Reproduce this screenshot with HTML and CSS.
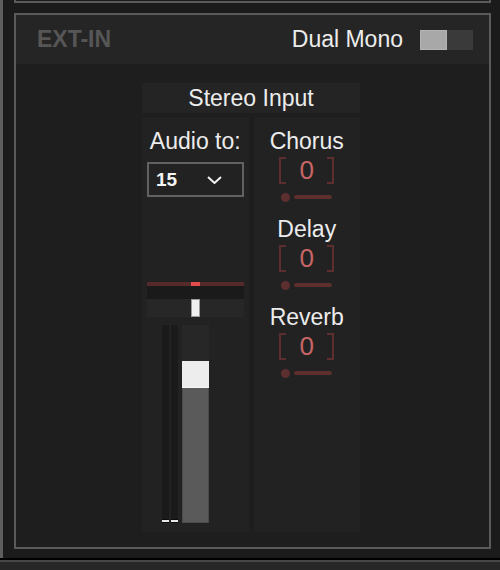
FILE: index.html
```html
<!DOCTYPE html>
<html lang="en">
<head>
    <meta charset="UTF-8">
    <meta name="viewport" content="width=device-width, initial-scale=1.0">
    <title>EXT-IN</title>
    <link rel="stylesheet" href="styles.css">
</head>
<body>
    <div class="rack">
        <div class="prev-panel"></div>
        <section class="panel">
            <header class="panel-head">
                <span class="panel-title">EXT-IN</span>
                <span class="mode-label">Dual Mono</span>
                <span class="toggle"><span class="toggle-knob"></span></span>
            </header>
            <div class="panel-body">
                <div class="strip">
                    <div class="strip-name">Stereo Input</div>
                    <div class="strip-cols">
                        <div class="col col-route">
                            <div class="label">Audio to:</div>
                            <div class="select">
                                <span class="select-value">15</span>
                                <svg class="chevron" width="15" height="8" viewBox="0 0 15 8">
                                    <polyline points="1,1 7.5,7 14,1" fill="none" stroke="#f2f2f2" stroke-width="2"/>
                                </svg>
                            </div>
                            <div class="pan">
                                <div class="pan-line"><span class="pan-mark"></span></div>
                                <div class="pan-gap"></div>
                                <div class="pan-track"><span class="pan-knob"></span></div>
                            </div>
                            <div class="level">
                                <div class="meter"><span class="peak"></span></div>
                                <div class="meter"><span class="peak"></span></div>
                                <div class="fader">
                                    <div class="fader-track"></div>
                                    <div class="fader-cap"></div>
                                    <div class="fader-fill"></div>
                                </div>
                            </div>
                        </div>
                        <div class="col col-sends">
                            <div class="send">
                                <div class="label">Chorus</div>
                                <div class="send-value"><span class="br br-l"></span><span class="num">0</span><span class="br br-r"></span></div>
                                <div class="send-slider"><span class="dot"></span><span class="line"></span></div>
                            </div>
                            <div class="send">
                                <div class="label">Delay</div>
                                <div class="send-value"><span class="br br-l"></span><span class="num">0</span><span class="br br-r"></span></div>
                                <div class="send-slider"><span class="dot"></span><span class="line"></span></div>
                            </div>
                            <div class="send">
                                <div class="label">Reverb</div>
                                <div class="send-value"><span class="br br-l"></span><span class="num">0</span><span class="br br-r"></span></div>
                                <div class="send-slider"><span class="dot"></span><span class="line"></span></div>
                            </div>
                        </div>
                    </div>
                </div>
            </div>
        </section>
    </div>
    <div class="rack-foot"></div>
</body>
</html>
```

FILE: styles.css
```css
:root {
    --bg: #1b1b1b;
    --panel-bg: #1e1e1e;
    --head-bg: #252525;
    --col-bg: #222222;
    --frame: #5a5a5a;
    --text: #ececec;
    --send-dark: #5c2e2e;
    --send-red: #c86565;
}
* {
    box-sizing: border-box;
}
body {
    margin: 0;
    width: 500px;
    height: 570px;
    overflow: hidden;
    background-color: var(--bg);
    font-family: 'Liberation Sans', Helvetica, Arial, sans-serif;
    color: var(--text);
}
.rack {
    height: 558px;
    border-left: 3px solid #5e5e5e;
    padding-left: 11px;
}
.prev-panel {
    width: 477px;
    height: 3px;
    border: 2px solid var(--frame);
    border-top: none;
}
.panel {
    width: 477px;
    height: 536px;
    margin-top: 10px;
    border: 2px solid var(--frame);
    background-color: var(--panel-bg);
}
.panel-head {
    height: 49px;
    display: flex;
    align-items: center;
    padding: 0 16px 0 21px;
    background-color: var(--head-bg);
}
.panel-title {
    flex: 1;
    font-size: 23px;
    font-weight: 700;
    color: #565656;
}
.mode-label {
    font-size: 23px;
    margin-right: 17px;
}
.toggle {
    display: flex;
    width: 53px;
    height: 20px;
    background-color: #3a3a3a;
}
.toggle-knob {
    width: 27px;
    height: 20px;
    background-color: #a8a8a8;
    border: 1px solid #b4b4b4;
}
.panel-body {
    display: flex;
    justify-content: center;
    padding: 19px 3px 0 0;
}
.strip {
    width: 218px;
}
.strip-name {
    height: 30px;
    line-height: 30px;
    text-align: center;
    font-size: 23px;
    background-color: #242424;
}
.strip-cols {
    display: grid;
    grid-template-columns: 1fr 1fr;
    gap: 5px;
    height: 415px;
    margin-top: 4px;
}
.col {
    background-color: var(--col-bg);
}
.label {
    height: 26px;
    line-height: 26px;
    font-size: 23px;
    text-align: center;
}
.col-route {
    padding-top: 11px;
}

/* output select */
.select {
    height: 35px;
    margin: 8px 5px 0;
    display: flex;
    align-items: center;
    justify-content: space-between;
    padding: 0 20px 0 7px;
    border: 2px solid #616161;
}
.select-value {
    font-size: 19px;
    font-weight: 700;
    color: #f4f4f4;
}

/* pan */
.pan {
    margin: 85px 5px 0;
}
.pan-line {
    height: 4px;
    display: flex;
    justify-content: center;
    background-color: #562a2a;
}
.pan-mark {
    width: 9px;
    background-color: #e24c4c;
}
.pan-gap {
    height: 13px;
    background-color: #1a1a1a;
}
.pan-track {
    height: 18px;
    display: flex;
    justify-content: center;
    background-color: #272727;
}
.pan-knob {
    width: 9px;
    background-color: #efefef;
    border: 1px solid #9a9a9a;
}

/* level */
.level {
    display: flex;
    height: 198px;
    margin-top: 8px;
    padding-left: 20px;
}
.meter {
    width: 7px;
    margin-right: 2px;
    display: flex;
    flex-direction: column;
    justify-content: flex-end;
    background-color: #1a1a1a;
}
.peak {
    height: 4px;
    background-color: #e8e8e8;
    border-top: 1px solid #0c0c0c;
    border-bottom: 1px solid #0c0c0c;
}
.fader {
    width: 27px;
    margin-left: 2px;
    display: flex;
    flex-direction: column;
}
.fader-track {
    height: 36px;
    background-color: #272727;
}
.fader-cap {
    height: 27px;
    background-color: #ededed;
    border-bottom: 1px solid #f8f8f8;
}
.fader-fill {
    flex: 1;
    background-color: #5a5a5a;
    border: 1px solid #4b4b4b;
    border-top: none;
}

/* sends */
.col-sends {
    display: flex;
    flex-direction: column;
    gap: 15px;
    padding-top: 11px;
}
.send-value {
    display: flex;
    justify-content: space-between;
    width: 55px;
    height: 27px;
    margin: 3px auto 0;
}
.br {
    width: 7px;
    border: 2px solid var(--send-dark);
}
.br-l {
    border-right: none;
}
.br-r {
    border-left: none;
}
.num {
    font-size: 26px;
    line-height: 27px;
    color: var(--send-red);
}
.send-slider {
    display: flex;
    align-items: center;
    width: 51px;
    height: 8px;
    margin: 9px auto 0;
}
.dot {
    width: 9px;
    height: 9px;
    border-radius: 50%;
    background-color: var(--send-dark);
}
.line {
    width: 38px;
    height: 4px;
    margin-left: 4px;
    border-radius: 2px;
    background-color: var(--send-dark);
}
.rack-foot {
    height: 12px;
    border-top: 2px solid #000;
    box-shadow: inset 0 2px 0 #474747;
    background-color: #272727;
}
```
